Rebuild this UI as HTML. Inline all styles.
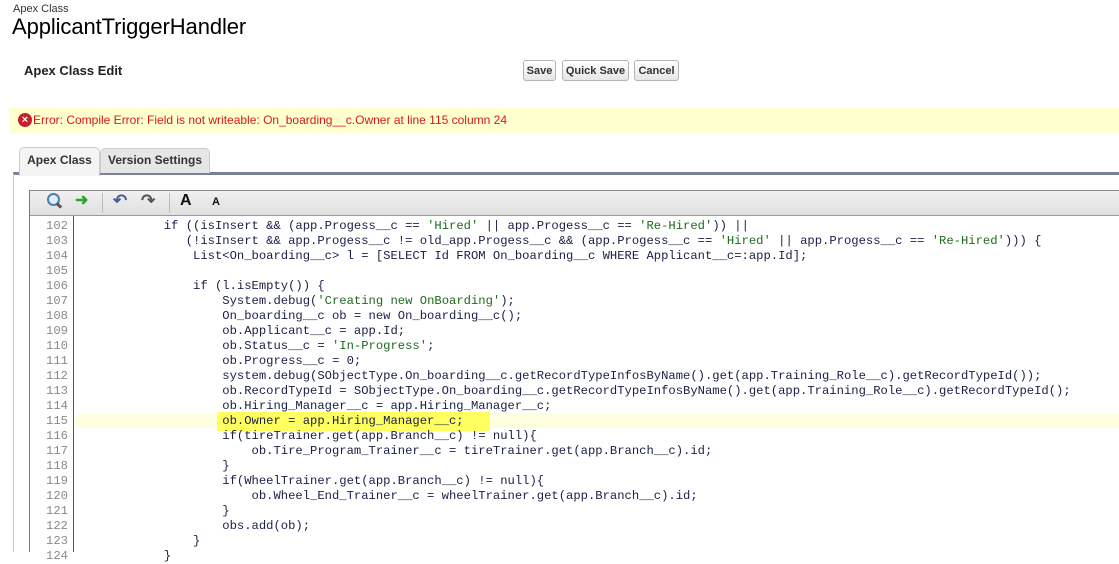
<!DOCTYPE html>
<html><head><meta charset="utf-8"><style>
body{margin:0;width:1119px;height:552px;overflow:hidden;background:#fff;font-family:"Liberation Sans",Arial,sans-serif;position:relative}
.a{position:absolute}
.btn{position:absolute;top:60px;height:21px;border:1px solid #b5b5b5;border-radius:3px;background:linear-gradient(#fff,#e6e6e6);font:bold 11px "Liberation Sans",sans-serif;color:#333;line-height:20px;text-align:center;box-sizing:border-box}
.code{position:absolute;left:76px;top:219px;font:12.2px/15px "Liberation Mono",monospace;color:#1a1f45;white-space:pre}
.ln{position:absolute;left:30px;width:38px;top:219px;font:12.2px/15px "Liberation Mono",monospace;color:#8a8a8a;text-align:right;white-space:pre}
.s{color:#1d6b1d}
</style></head><body>
<div class="a" style="left:13px;top:3px;font-size:11px;color:#333">Apex Class</div>
<div class="a" style="left:12px;top:14px;font-size:22px;color:#000;letter-spacing:-0.1px">ApplicantTriggerHandler</div>
<div class="a" style="left:24px;top:63px;font-size:13px;font-weight:bold;color:#222">Apex Class Edit</div>
<div class="btn" style="left:523px;width:33px">Save</div>
<div class="btn" style="left:562px;width:67px">Quick Save</div>
<div class="btn" style="left:634px;width:45px">Cancel</div>
<div class="a" style="left:9px;top:108px;width:1110px;height:25px;background:#ffffd0"></div>
<div class="a" style="left:18px;top:113px;width:14px;height:14px;border-radius:50%;background:#c8202a;color:#fff;font-size:11px;font-weight:bold;text-align:center;line-height:14px">×</div>
<div class="a" style="left:33px;top:113px;font-size:12px;color:#d81a1a">Error: Compile Error: Field is not writeable: On_boarding__c.Owner at line 115 column 24</div>
<div class="a" style="left:13px;top:172px;width:1106px;height:380px;border-left:1px solid #c8c8c8;border-top:3px solid #7a8296;background:#fff;box-sizing:border-box"></div>
<div class="a" style="left:19px;top:147px;width:79px;height:28px;border:1px solid #ccc;border-bottom:none;border-radius:5px 5px 0 0;background:#f4f4f4;font-size:12px;font-weight:bold;color:#333;text-align:center;line-height:24px">Apex Class</div>
<div class="a" style="left:100px;top:148px;width:108px;height:24px;border:1px solid #ccc;border-bottom:none;border-radius:5px 5px 0 0;background:#e6e6e6;font-size:12px;font-weight:bold;color:#333;text-align:center;line-height:22px">Version Settings</div>
<div class="a" style="left:29px;top:190px;width:1090px;height:362px;border-left:1px solid #7a7a7a;border-top:1px solid #888;box-sizing:border-box"></div>
<div class="a" style="left:30px;top:191px;width:1089px;height:24px;background:linear-gradient(#f0f0f0,#e0e0e0);border-bottom:1px solid #999"></div>
<div class="a" style="left:47px;top:193px;width:9px;height:9px;border:2px solid #4a7fb0;border-radius:50%;background:#dfefff"></div>
<div class="a" style="left:56px;top:204px;width:6px;height:3px;background:#555;transform:rotate(45deg)"></div>
<div class="a" style="left:75px;top:190px;font-size:16px;color:#2aa82a;font-weight:bold">➜</div>
<div class="a" style="left:102px;top:193px;width:1px;height:20px;background:#bbb"></div>
<div class="a" style="left:113px;top:191px;font-size:17px;color:#4a5f9a;font-weight:bold">↶</div>
<div class="a" style="left:141px;top:191px;font-size:17px;color:#555;font-weight:bold">↷</div>
<div class="a" style="left:169px;top:193px;width:1px;height:20px;background:#bbb"></div>
<div class="a" style="left:180px;top:192px;font-size:16px;font-weight:bold;color:#111">A</div>
<div class="a" style="left:212px;top:196px;font-size:11px;font-weight:bold;color:#111">A</div>
<div class="a" style="left:73px;top:216px;width:1px;height:336px;background:#555"></div>
<div class="a" style="left:75px;top:413px;width:1044px;height:15px;background:#ffffe0"></div>
<div class="a" style="left:217px;top:412px;width:273px;height:19px;background:#ffff60"></div>
<div class="ln">102
103
104
105
106
107
108
109
110
111
112
113
114
115
116
117
118
119
120
121
122
123
124</div>
<div class="code">            if ((isInsert &amp;&amp; (app.Progess__c == <span class="s">'Hired'</span> || app.Progess__c == <span class="s">'Re-Hired'</span>)) ||
               (!isInsert &amp;&amp; app.Progess__c != old_app.Progess__c &amp;&amp; (app.Progess__c == <span class="s">'Hired'</span> || app.Progess__c == <span class="s">'Re-Hired'</span>))) {
                List&lt;On_boarding__c&gt; l = [SELECT Id FROM On_boarding__c WHERE Applicant__c=:app.Id];

                if (l.isEmpty()) {
                    System.debug(<span class="s">'Creating new OnBoarding'</span>);
                    On_boarding__c ob = new On_boarding__c();
                    ob.Applicant__c = app.Id;
                    ob.Status__c = <span class="s">'In-Progress'</span>;
                    ob.Progress__c = 0;
                    system.debug(SObjectType.On_boarding__c.getRecordTypeInfosByName().get(app.Training_Role__c).getRecordTypeId());
                    ob.RecordTypeId = SObjectType.On_boarding__c.getRecordTypeInfosByName().get(app.Training_Role__c).getRecordTypeId();
                    ob.Hiring_Manager__c = app.Hiring_Manager__c;
                    ob.Owner = app.Hiring_Manager__c;
                    if(tireTrainer.get(app.Branch__c) != null){
                        ob.Tire_Program_Trainer__c = tireTrainer.get(app.Branch__c).id;
                    }
                    if(WheelTrainer.get(app.Branch__c) != null){
                        ob.Wheel_End_Trainer__c = wheelTrainer.get(app.Branch__c).id;
                    }
                    obs.add(ob);
                }
            }</div>
</body></html>
